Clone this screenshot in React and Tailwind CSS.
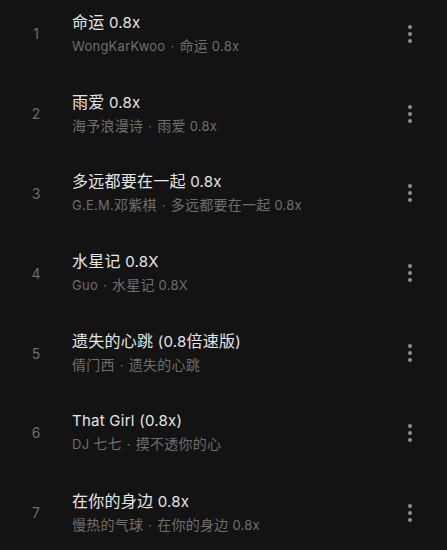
import React from "react";

const songs = [
  ["命运 0.8x", "WongKarKwoo", "命运 0.8x"],
  ["雨爱 0.8x", "海予浪漫诗", "雨爱 0.8x"],
  ["多远都要在一起 0.8x", "G.E.M.邓紫棋", "多远都要在一起 0.8x"],
  ["水星记 0.8X", "Guo", "水星记 0.8X"],
  ["遗失的心跳 (0.8倍速版)", "倩门西", "遗失的心跳"],
  ["That Girl (0.8x)", "DJ 七七", "摸不透你的心"],
  ["在你的身边 0.8x", "慢热的气球", "在你的身边 0.8x"],
];

function Mixed({ text, cjk }) {
  const parts = text.split(/([\u3000-\u9fff\uff00-\uffef]+)/);
  return parts.map((p, i) =>
    /[\u3000-\u9fff\uff00-\uffef]/.test(p) ? (
      <span key={i} className={cjk}>
        {p}
      </span>
    ) : (
      <React.Fragment key={i}>{p}</React.Fragment>
    )
  );
}

export default function App() {
  return (
    <div
      className="w-[447px] h-[550px] overflow-hidden bg-[#131313]"
      style={{ fontFamily: 'Inter, "Noto Sans CJK SC", sans-serif' }}
    >
      <div className="-mt-[6px]">
        {songs.map(([t, a, b], i) => (
          <div key={i} className="flex items-center h-[79.8px]">
            <div className="w-[72px] text-center text-[14px] text-[#6c6c6c]">{i + 1}</div>
            <div className="flex-1 flex flex-col gap-[3px] whitespace-nowrap tracking-[0.25px]">
              <div className="text-[15px] leading-[20px] text-[#e6e6e6]">
                <Mixed text={t} cjk="text-[16px]" />
              </div>
              <div className="text-[13px] leading-[20px] text-[#6e6e6e]">
                <Mixed text={a} cjk="text-[14px]" />
                <span className="mx-[5px]">·</span>
                <Mixed text={b} cjk="text-[14px]" />
              </div>
            </div>
            <div className="w-[76px] flex flex-col items-center gap-[3px] pl-[1px]">
              <span className="w-[4px] h-[4px] rounded-full bg-[#8f8f8f]" />
              <span className="w-[4px] h-[4px] rounded-full bg-[#8f8f8f]" />
              <span className="w-[4px] h-[4px] rounded-full bg-[#8f8f8f]" />
            </div>
          </div>
        ))}
      </div>
    </div>
  );
}
